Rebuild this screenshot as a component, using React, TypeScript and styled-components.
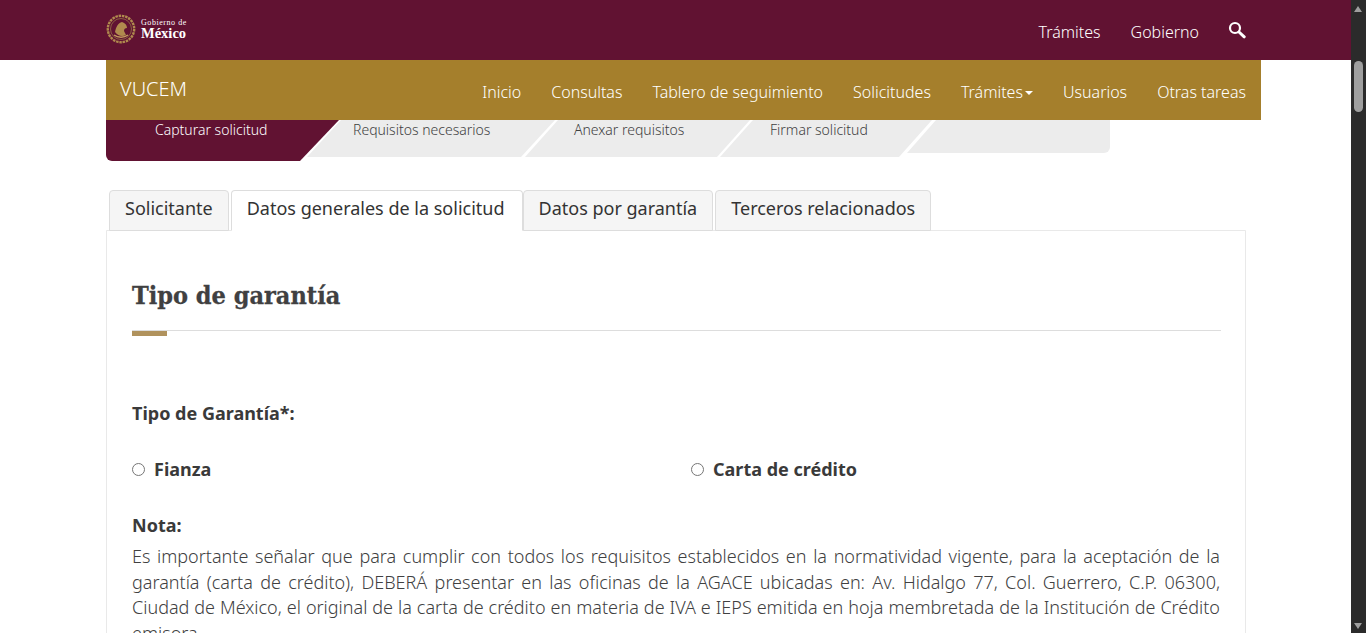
import React from 'react';
import styled, { createGlobalStyle } from 'styled-components';

const GlobalStyle = createGlobalStyle`
  html, body {
    margin: 0;
    height: 100%;
    overflow: hidden;
    background: #fff;
  }
  body {
    font-family: 'Noto Sans', 'Open Sans', sans-serif;
    color: #404041;
  }
`;

const Page = styled.div`
  width: 1351px;
  height: 633px;
  overflow: hidden;
`;

const TopBar = styled.header`
  height: 60px;
  background: #611232;
  display: flex;
  align-items: center;
  justify-content: space-between;
  padding: 0 105px 0 106px;
`;

const Logo = styled.div`
  display: flex;
  align-items: center;
  gap: 5px;
  margin-top: -2px;
`;

const LogoText = styled.div`
  display: flex;
  flex-direction: column;
  color: #fff;
  font-family: 'Liberation Serif', serif;
`;

const LogoSmall = styled.span`
  font-size: 8px;
  line-height: 8px;
  letter-spacing: 0.55px;
`;

const LogoBig = styled.span`
  font-size: 14.5px;
  line-height: 13px;
  font-weight: 700;
`;

const TopLinks = styled.nav`
  display: flex;
  align-items: center;
  gap: 30px;
  margin-top: 3px;
  font-size: 16px;
  font-weight: 300;
  color: #fff;
`;

const SearchSlot = styled.span`
  display: flex;
  margin: -3px 0 0 -1px;
`;

const GoldWrap = styled.div`
  padding-left: 106px;
`;

const GoldNav = styled.nav`
  width: 1155px;
  height: 60px;
  background: #a57f2c;
  display: flex;
  align-items: center;
  justify-content: space-between;
  padding: 0 15px 0 14px;
  box-sizing: border-box;
  color: #fff;
  font-weight: 300;
`;

const Brand = styled.span`
  font-size: 20px;
  margin-top: -3px;
`;

const NavLinks = styled.div`
  display: flex;
  gap: 30px;
  font-size: 16px;
  margin-top: 4px;
`;

const NavLink = styled.span`
  display: inline-flex;
  align-items: center;
`;

const Caret = styled.span`
  width: 0;
  height: 0;
  margin-left: 2px;
  margin-top: 2px;
  border-left: 4px solid transparent;
  border-right: 4px solid transparent;
  border-top: 4px solid #fff;
`;

const Steps = styled.div`
  display: flex;
  align-items: flex-start;
  padding-left: 106px;
  height: 41px;
`;

const Step = styled.div<{
  $w: number;
  $h: number;
  $ml: number;
  $pad: number;
  $slant: number;
  $active?: boolean;
  $first?: boolean;
  $last?: boolean;
}>`
  box-sizing: border-box;
  width: ${p => p.$w}px;
  height: ${p => p.$h}px;
  margin-left: ${p => p.$ml}px;
  padding-left: ${p => p.$pad}px;
  background: ${p => (p.$active ? '#611232' : '#ececec')};
  color: ${p => (p.$active ? '#fff' : '#404041')};
  border-radius: ${p => (p.$first ? '0 0 0 6px' : p.$last ? '0 0 6px 0' : '0')};
  clip-path: ${p =>
    p.$first
      ? `polygon(0 0, 100% 0, calc(100% - ${p.$slant}px) 100%, 0 100%)`
      : p.$last
        ? `polygon(${p.$slant}px 0, 100% 0, 100% 100%, 0 100%)`
        : `polygon(${p.$slant}px 0, 100% 0, calc(100% - ${p.$slant}px) 100%, 0 100%)`};
  font-size: 14px;
  font-weight: 300;
  line-height: 20px;
`;

const Main = styled.main`
  width: 1140px;
  margin: 29px 0 0 106px;
`;

const Tabs = styled.div`
  display: flex;
  gap: 2px;
  padding-left: 3px;
  margin-bottom: -1px;
  position: relative;
`;

const Tab = styled.div<{ $active?: boolean }>`
  height: 41px;
  box-sizing: border-box;
  padding: 0 ${p => (p.$active ? 17 : 15)}px 6px 15px;
  margin-right: ${p => (p.$active ? -2 : 0)}px;
  display: flex;
  align-items: center;
  font-size: 18px;
  font-weight: 400;
  color: #333;
  background: ${p => (p.$active ? '#fff' : '#f5f5f5')};
  border: 1px solid #ddd;
  border-bottom-color: ${p => (p.$active ? '#fff' : '#ddd')};
  border-radius: 4px 4px 0 0;
`;

const Panel = styled.section`
  border: 1px solid #e9e9e9;
  border-radius: 0 0 4px 4px;
  padding: 44px 24px 0 25px;
  height: 480px;
`;

const Title = styled.h2`
  margin: 0;
  font-family: 'DejaVu Serif Condensed', 'DejaVu Serif', serif;
  font-size: 25px;
  line-height: 42px;
  font-weight: 700;
  color: #404041;
  -webkit-text-stroke: 0.3px #404041;
`;

const Rule = styled.div`
  margin-top: 13px;
  border-top: 1px solid #ddd;
  &::after {
    content: '';
    display: block;
    width: 35px;
    height: 5px;
    background: #b0925d;
  }
`;

const FieldLabel = styled.div`
  margin-top: 64px;
  font-size: 18px;
  line-height: 26px;
  font-weight: 700;
  color: #3a3a3a;
`;

const RadioRow = styled.div`
  margin-top: 30px;
  display: grid;
  grid-template-columns: 559px 1fr;
`;

const RadioLabel = styled.label`
  display: flex;
  align-items: center;
  gap: 9px;
  font-size: 18px;
  line-height: 26px;
  font-weight: 700;
  color: #3a3a3a;
`;

const RadioInput = styled.input`
  width: 13px;
  height: 13px;
  margin: 0;
`;

const NoteTitle = styled.div`
  margin-top: 30px;
  font-size: 18px;
  line-height: 26px;
  font-weight: 700;
  color: #3a3a3a;
`;

const NoteText = styled.p`
  margin: 6px 1px 0 0;
  font-size: 18px;
  line-height: 25.7px;
  font-weight: 300;
  text-align: justify;
  color: #404041;
`;

const ScrollTrack = styled.div`
  position: fixed;
  top: 0;
  right: 0;
  width: 15px;
  height: 633px;
  background: #2b2b2b;
`;

const ScrollThumb = styled.div`
  position: absolute;
  top: 61px;
  left: 3px;
  width: 9px;
  height: 51px;
  border-radius: 5px;
  background: #9f9f9f;
`;

const ScrollArrow = styled.div<{ $down?: boolean }>`
  position: absolute;
  left: 3px;
  ${p => (p.$down ? 'bottom: 4px;' : 'top: 6px;')}
  width: 0;
  height: 0;
  border-left: 4.5px solid transparent;
  border-right: 4.5px solid transparent;
  ${p => (p.$down ? 'border-top: 6px solid #9f9f9f;' : 'border-bottom: 6px solid #9f9f9f;')}
`;

function Emblem() {
  return (
    <svg width="30" height="30" viewBox="0 0 30 30" fill="none">
      <circle cx="15" cy="15" r="13.2" stroke="#b08a4e" strokeWidth="2.4" strokeDasharray="2.5 0.8" />
      <circle cx="15" cy="15" r="10.5" stroke="#8a5f42" strokeWidth="1" />
      <path d="M9 18c1-5 3-9 7-10 3 1 5 3 5 6-2 0-3 1-3 3l2 4c-4 2-8 1-11-3z" fill="#b08a4e" />
      <path d="M8 21c4 3 10 3 14 0" stroke="#c29c5e" strokeWidth="1.5" />
    </svg>
  );
}

function SearchIcon() {
  return (
    <svg width="18" height="18" viewBox="0 0 18 18" fill="none" stroke="#fff">
      <circle cx="7" cy="7" r="5" strokeWidth="2.2" />
      <path d="M11 11l5.2 4.8" strokeWidth="3" strokeLinecap="round" />
    </svg>
  );
}

const navItems = ['Inicio', 'Consultas', 'Tablero de seguimiento', 'Solicitudes', 'Trámites', 'Usuarios', 'Otras tareas'];

const tabs = ['Solicitante', 'Datos generales de la solicitud', 'Datos por garantía', 'Terceros relacionados'];

export default function App() {
  return (
    <Page>
      <GlobalStyle />
      <TopBar>
        <Logo>
          <Emblem />
          <LogoText>
            <LogoSmall>Gobierno de</LogoSmall>
            <LogoBig>México</LogoBig>
          </LogoText>
        </Logo>
        <TopLinks>
          <span>Trámites</span>
          <span>Gobierno</span>
          <SearchSlot><SearchIcon /></SearchSlot>
        </TopLinks>
      </TopBar>
      <GoldWrap>
        <GoldNav>
          <Brand>VUCEM</Brand>
          <NavLinks>
            {navItems.map(item => (
              <NavLink key={item}>
                {item}
                {item === 'Trámites' && <Caret />}
              </NavLink>
            ))}
          </NavLinks>
        </GoldNav>
      </GoldWrap>
      <Steps>
        <Step $first $active $w={233} $h={41} $ml={0} $slant={39} $pad={49}>Capturar solicitud</Step>
        <Step $w={248} $h={37} $ml={-32} $slant={34} $pad={46}>Requisitos necesarios</Step>
        <Step $w={225} $h={37} $ml={-30} $slant={33} $pad={49}>Anexar requisitos</Step>
        <Step $w={212} $h={37} $ml={-30} $slant={33} $pad={50}>Firmar solicitud</Step>
        <Step $last $w={203} $h={33} $ml={-25} $slant={29} $pad={0} />
      </Steps>
      <Main>
        <Tabs>
          {tabs.map((t, i) => (
            <Tab key={t} $active={i === 1}>{t}</Tab>
          ))}
        </Tabs>
        <Panel>
          <Title>Tipo de garantía</Title>
          <Rule />
          <FieldLabel>Tipo de Garantía*:</FieldLabel>
          <RadioRow>
            <RadioLabel><RadioInput type="radio" name="tipo" />Fianza</RadioLabel>
            <RadioLabel><RadioInput type="radio" name="tipo" />Carta de crédito</RadioLabel>
          </RadioRow>
          <NoteTitle>Nota:</NoteTitle>
          <NoteText>
            Es importante señalar que para cumplir con todos los requisitos establecidos en la normatividad vigente, para la aceptación de la garantía (carta de crédito), DEBERÁ presentar en las oficinas de la AGACE ubicadas en: Av. Hidalgo 77, Col. Guerrero, C.P. 06300, Ciudad de México, el original de la carta de crédito en materia de IVA e IEPS emitida en hoja membretada de la Institución de Crédito emisora.
          </NoteText>
        </Panel>
      </Main>
      <ScrollTrack>
        <ScrollArrow />
        <ScrollThumb />
        <ScrollArrow $down />
      </ScrollTrack>
    </Page>
  );
}
